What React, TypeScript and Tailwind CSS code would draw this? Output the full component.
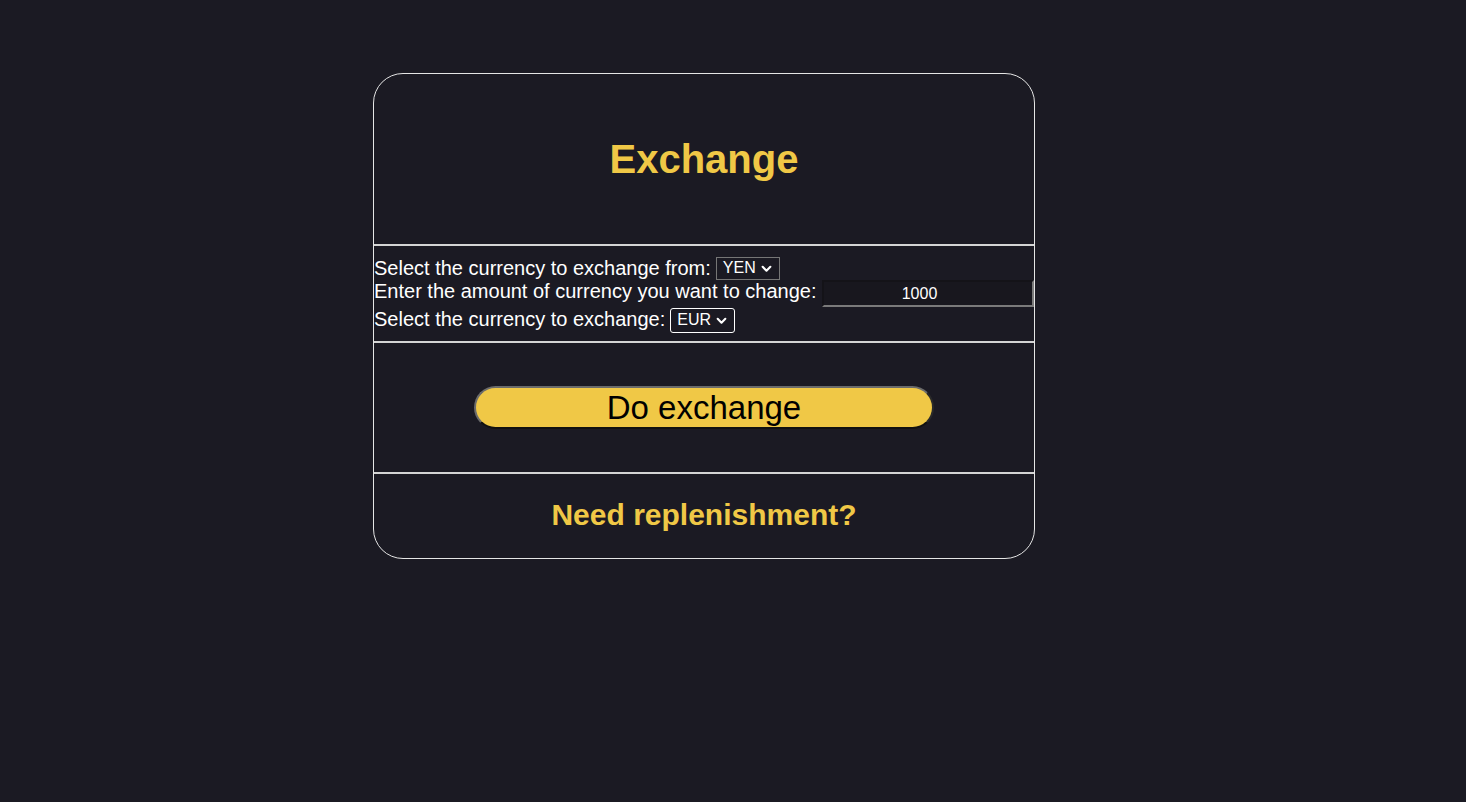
import { useState } from 'react';

function Chevron() {
	return (
		<svg width="11" height="11" viewBox="0 0 10 10" className="ml-[5px]" fill="none">
			<path d="M1.5 3.5 5 7l3.5-3.5" stroke="currentColor" strokeWidth="1.9" strokeLinecap="round" strokeLinejoin="round" />
		</svg>
	);
}

function CurrencySelect({ value, focused }: { value: string; focused?: boolean }) {
	return (
		<span
			className={
				focused
					? 'ml-[5px] inline-flex h-[25px] shrink-0 items-center rounded-[3px] border border-white bg-[#1b1a23] pl-[6px] pr-[7px] text-[16px] text-white'
					: 'ml-[5px] inline-flex h-[23px] shrink-0 items-center border border-[#767676] bg-[#1b1a23] pl-[6px] pr-[7px] text-[16px] text-white'
			}
		>
			{value}
			<Chevron />
		</span>
	);
}

export default function App() {
	const [amount, setAmount] = useState('1000');

	return (
		<div className="min-h-[802px] w-full bg-[#1b1a23] pt-[73px] font-['Liberation_Sans',Arial,sans-serif] text-white">
			<div className="ml-[373px] w-[662px] overflow-hidden rounded-[30px] border border-[#e5e5e5]">
				<div className="flex h-[172px] items-center justify-center border-b-2 border-[#d4d4d4]">
					<h1 className="text-[40px] font-bold text-[#f0c846]">Exchange</h1>
				</div>

				<div className="flex flex-col border-b-2 border-[#d4d4d4] pt-[10px] pb-[8px] text-[20px]">
					<div className="flex h-[24px] items-center whitespace-nowrap">
						<span>Select the currency to exchange from:</span>
						<CurrencySelect value="YEN" />
					</div>
					<div className="flex h-[27px] items-center whitespace-nowrap">
						<span className="pb-[5px]">Enter the amount of currency you want to change:</span>
						<input
							value={amount}
							onChange={(e) => setAmount(e.target.value)}
							className="ml-[6px] h-[27px] w-[212px] shrink-0 border-2 border-t-[#141318] border-r-[#7a7a7a] border-b-[#7a7a7a] border-l-[#141318] bg-[#18171e] pr-[18px] text-center text-[16px] text-white outline-none"
						/>
					</div>
					<div className="flex h-[26px] items-center whitespace-nowrap">
						<span className="pb-[3px]">Select the currency to exchange:</span>
						<CurrencySelect value="EUR" focused />
					</div>
				</div>

				<div className="flex h-[131px] items-center justify-center border-b-2 border-[#d4d4d4]">
					<button className="flex h-[43px] w-[460px] items-center justify-center rounded-full border-2 border-t-[#6b6b6b] border-r-[#2a2a2a] border-b-[#111] border-l-[#6b6b6b] bg-[#f0c846] text-[33px] leading-none text-black">
						Do exchange
					</button>
				</div>

				<div className="flex h-[84px] items-center justify-center pb-[3px]">
					<h2 className="text-[30px] font-bold text-[#f0c846]">Need replenishment?</h2>
				</div>
			</div>
		</div>
	);
}
